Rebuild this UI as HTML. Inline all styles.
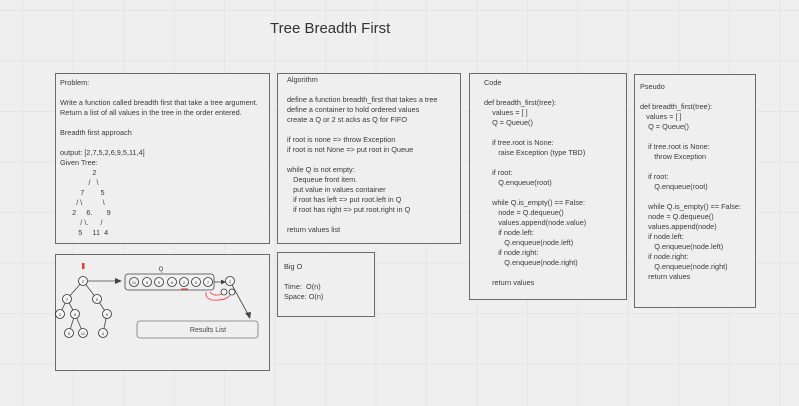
<!DOCTYPE html>
<html><head><meta charset="utf-8"><style>
body{margin:0;width:799px;height:406px;overflow:hidden;background:#efefef;font-family:"Liberation Sans",sans-serif;color:#333;position:relative;
background-image:linear-gradient(to right,#e5e5e5 1px,transparent 1px),linear-gradient(to bottom,#e5e5e5 1px,transparent 1px);
background-size:50.5px 50.5px;background-position:22px 10px;}
.box{position:absolute;border:1.5px solid #6a6a6a;background:#efefef;box-sizing:border-box}
.t{position:absolute;white-space:pre;font-size:7.3px;line-height:10px;color:#3a3a3a}
h1{position:absolute;left:270px;top:20px;margin:0;font-weight:normal;font-size:15px;color:#333}
</style></head><body>
<h1>Tree Breadth First</h1>
<div class="box" style="left:55px;top:73px;width:215px;height:171px"></div>
<div class="t" style="left:60px;top:78px">Problem:

Write a function called breadth first that take a tree argument.
Return a list of all values in the tree in the order entered.

Breadth first approach

output: [2,7,5,2,6,9,5,11,4]
Given Tree:
                2
              /   \
          7        5
        / \          \
      2     6.       9
          / \.      /
         5     11  4</div>
<div class="box" style="left:277px;top:73px;width:184px;height:171px"></div>
<div class="t" style="left:287px;top:75px">Algorithm

define a function breadth_first that takes a tree
define a container to hold ordered values
create a Q or 2 st acks as Q for FIFO

if root is none => throw Exception
if root is not None => put root in Queue

while Q is not empty:
   Dequeue front item.
   put value in values container
   if root has left => put root.left in Q
   if root has right => put root.right in Q

return values list</div>
<div class="box" style="left:469px;top:73px;width:158px;height:227px"></div>
<div class="t" style="left:484px;top:78px">Code

def breadth_first(tree):
    values = [ ]
    Q = Queue()

    if tree.root is None:
       raise Exception (type TBD)

    if root:
       Q.enqueue(root)

    while Q.is_empty() == False:
       node = Q.dequeue()
       values.append(node.value)
       if node.left:
          Q.enqueue(node.left)
       if node.right:
          Q.enqueue(node.right)

    return values</div>
<div class="box" style="left:634px;top:74px;width:122px;height:234px"></div>
<div class="t" style="left:640px;top:82px">Pseudo

def breadth_first(tree):
   values = [ ]
    Q = Queue()

    if tree.root is None:
       throw Exception

    if root:
       Q.enqueue(root)

    while Q.is_empty() == False:
    node = Q.dequeue()
    values.append(node)
    if node.left:
       Q.enqueue(node.left)
    if node.right:
       Q.enqueue(node.right)
    return values</div>
<div class="box" style="left:55px;top:254px;width:215px;height:117px"></div>
<div class="box" style="left:277px;top:252px;width:98px;height:65px"></div>
<div class="t" style="left:284px;top:262px">Big O

Time:  O(n)
Space: O(n)</div>
<svg style="position:absolute;left:0;top:0" width="799" height="406">
<g stroke="#444" stroke-width="0.8" fill="none">
<line x1="83" y1="281" x2="67" y2="299"/><line x1="83" y1="281" x2="97" y2="299"/>
<line x1="67" y1="299" x2="60" y2="314"/><line x1="67" y1="299" x2="75" y2="314"/>
<line x1="97" y1="299" x2="107" y2="314"/><line x1="75" y1="314" x2="69" y2="333"/>
<line x1="75" y1="314" x2="83" y2="333"/><line x1="107" y1="314" x2="103" y2="333"/>
<line x1="88" y1="281" x2="120" y2="281"/>
<rect x="125" y="274" width="89" height="16" rx="3"/>
<line x1="214" y1="282" x2="224" y2="282"/>
<line x1="232" y1="285" x2="249" y2="316"/>
</g>
<g fill="#444"><polygon points="122,281 115,278 115,284"/><polygon points="226,282 221,279.5 221,284.5"/><polygon points="250,319 245,313 251,312"/></g>
<g stroke="#333" stroke-width="0.8" fill="#f4f4f4">
<circle cx="83" cy="281" r="4.5"/><circle cx="67" cy="299" r="4.5"/><circle cx="97" cy="299" r="4.5"/>
<circle cx="60" cy="314" r="4.5"/><circle cx="75" cy="314" r="4.5"/><circle cx="107" cy="314" r="4.5"/>
<circle cx="69" cy="333" r="4.5"/><circle cx="83" cy="333" r="4.5"/><circle cx="103" cy="333" r="4.5"/>
<circle cx="134" cy="282" r="4.5"/><circle cx="147" cy="282" r="4.5"/><circle cx="159" cy="282" r="4.5"/>
<circle cx="172" cy="282" r="4.5"/><circle cx="184" cy="282" r="4.5"/><circle cx="196" cy="282" r="4.5"/>
<circle cx="208" cy="282" r="4.5"/><circle cx="230" cy="281" r="4.5"/>
<circle cx="224" cy="292" r="3"/><circle cx="232" cy="292" r="3"/>
</g>
<g font-size="4" fill="#333" text-anchor="middle" font-family="Liberation Sans">
<text x="83" y="283">2</text><text x="67" y="301">7</text><text x="97" y="301">5</text>
<text x="60" y="316">2</text><text x="75" y="316">6</text><text x="107" y="316">9</text>
<text x="69" y="335">5</text><text x="83" y="335">11</text><text x="103" y="335">4</text>
<text x="134" y="284">11</text><text x="147" y="284">5</text><text x="159" y="284">9</text>
<text x="172" y="284">6</text><text x="184" y="284">2</text><text x="196" y="284">5</text>
<text x="208" y="284">7</text><text x="230" y="283">2</text>
</g>
<text x="161" y="271" font-size="6" fill="#333" text-anchor="middle" font-family="Liberation Sans">Q</text>
<rect x="82" y="263" width="2.5" height="6" fill="#e33"/>
<line x1="181" y1="289" x2="188" y2="289" stroke="#e33" stroke-width="1"/>
<path d="M230 295 Q226 301 212 300 Q205 298 206 292" stroke="#e33" fill="none" stroke-width="0.8"/>
<path d="M222 294 Q214 297 210 292" stroke="#e33" fill="none" stroke-width="0.8"/>
<rect x="137" y="321" width="121" height="17" rx="3" fill="#efefef" stroke="#777" stroke-width="0.8"/>
<text x="208" y="332" font-size="7" fill="#444" text-anchor="middle" font-family="Liberation Sans">Results List</text>
</svg>
</body></html>
